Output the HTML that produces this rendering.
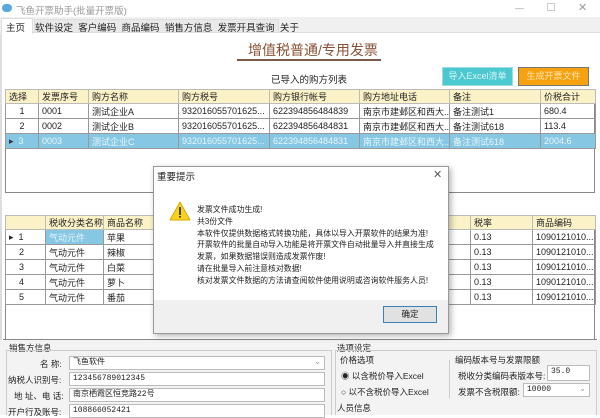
<!DOCTYPE html>
<html><head><meta charset="utf-8"><style>
*{margin:0;padding:0;box-sizing:border-box}
body{width:600px;height:415px;overflow:hidden;background:#fff;font-family:"Liberation Sans","Noto Sans CJK SC",sans-serif;font-size:9px;color:#222;position:relative}
.a{position:absolute;white-space:nowrap}
table{border-collapse:collapse;table-layout:fixed;position:absolute}
td{border:1px solid #999;height:15px;padding:0 3px;overflow:hidden;white-space:nowrap;font-size:9px}
tr.h td{background:#fbf2c8;height:13px;border-color:#bbb}
tr.s td{background:#86c7e3;color:#e8f6fb}
.box{position:absolute;border:1px solid #bbb;background:#fff;height:14px;font-size:8px;padding:0 3px;line-height:12px;font-family:"Liberation Mono","Noto Sans CJK SC",monospace}
.l{font-size:8.5px}
</style></head><body>
<div class="a" style="left:0;top:0;width:600px;height:17px;background:#fff"></div>
<div class="a" style="left:2px;top:4px;width:10px;height:8px;border-radius:5px;background:#5aa9dd"></div>
<div class="a" style="left:16px;top:3px;color:#999;font-size:9.5px">飞鱼开票助手(批量开票版)</div>
<div class="a" style="left:515px;top:3px;color:#999">—</div>
<div class="a" style="left:547px;top:3px;width:8px;height:8px;border:1px solid #ccc"></div>
<div class="a" style="left:578px;top:1px;color:#999;font-size:11px">✕</div>
<div class="a" style="left:0;top:17px;width:600px;height:16px;background:#f0f0f0;border-bottom:1px solid #ddd"></div>
<div class="a" style="left:1px;top:18px;width:32px;height:16px;background:#fff;border:1px solid #ddd;border-bottom:none;padding:1px 4px;font-size:9.5px">主页</div>
<div class="a" style="left:34px;top:19px;height:14px;width:245px;background:#e9e9e9;border:1px solid #ddd"></div>
<div class="a" style="left:35px;top:20px;font-size:9.5px">软件设定&nbsp;&nbsp;客户编码&nbsp;&nbsp;商品编码&nbsp;&nbsp;销售方信息&nbsp;&nbsp;发票开具查询&nbsp;&nbsp;关于</div>
<div class="a" style="left:0;top:34px;width:2px;height:381px;background:#ddd"></div>
<div class="a" style="left:248px;top:40px;font-size:14px;color:#8a5236">增值税普通/专用发票</div>
<div class="a" style="left:237px;top:59px;width:144px;height:2px;background:#7a5a4a"></div>
<div class="a" style="left:271px;top:72px;font-size:9.5px">已导入的购方列表</div>
<div class="a" style="left:442px;top:67px;width:71px;height:19px;background:#4cc8d0;border:1px solid #9cdde2;color:#d8f5f7;font-size:9px;text-align:center;line-height:17px">导入Excel清单</div>
<div class="a" style="left:518px;top:67px;width:71px;height:19px;background:#f6a20e;border:1px solid #777;color:#fde5b8;font-size:9px;text-align:center;line-height:17px">生成开票文件</div>
<div class="a" style="left:5px;top:89px;width:590px;height:104px;border:1px solid #888"></div>
<table style="left:5px;top:89px;width:590px">
<colgroup><col style="width:33px"><col style="width:50px"><col style="width:90px"><col style="width:91px"><col style="width:90px"><col style="width:90px"><col style="width:91px"><col style="width:55px"></colgroup>
<tr class="h"><td>选择</td><td>发票序号</td><td>购方名称</td><td>购方税号</td><td>购方银行帐号</td><td>购方地址电话</td><td>备注</td><td>价税合计</td></tr>
<tr><td style="text-align:center">1</td><td>0001</td><td>测试企业A</td><td>932016055701625...</td><td>622394856484839</td><td>南京市建邺区和西大...</td><td>备注测试1</td><td>680.4</td></tr>
<tr><td style="text-align:center">2</td><td>0002</td><td>测试企业B</td><td>932016055701625...</td><td>622394856484831</td><td>南京市建邺区和西大...</td><td>备注测试618</td><td>113.4</td></tr>
<tr class="s"><td><span style="color:#333">▸</span> &nbsp;3</td><td>0003</td><td>测试企业C</td><td>932016055701625...</td><td>622394856484831</td><td>南京市建邺区和西大...</td><td>备注测试618</td><td>2004.6</td></tr>
</table>
<div class="a" style="left:5px;top:215px;width:590px;height:125px;border:1px solid #888;border-bottom:none"></div>
<table style="left:5px;top:215px;width:590px">
<colgroup><col style="width:40px"><col style="width:58px"><col style="width:60px"><col style="width:307px"><col style="width:62px"><col style="width:63px"></colgroup>
<tr class="h"><td></td><td>税收分类名称</td><td>商品名称</td><td></td><td>税率</td><td>商品编码</td></tr>
<tr><td>▸ &nbsp;1</td><td style="background:#86c7e3;color:#e8f6fb">气动元件</td><td>苹果</td><td></td><td>0.13</td><td>1090121010...</td></tr>
<tr><td>&nbsp;&nbsp;&nbsp;&nbsp;2</td><td>气动元件</td><td>辣椒</td><td></td><td>0.13</td><td>1090121010...</td></tr>
<tr><td>&nbsp;&nbsp;&nbsp;&nbsp;3</td><td>气动元件</td><td>白菜</td><td></td><td>0.13</td><td>1090121010...</td></tr>
<tr><td>&nbsp;&nbsp;&nbsp;&nbsp;4</td><td>气动元件</td><td>萝卜</td><td></td><td>0.13</td><td>1090121010...</td></tr>
<tr><td>&nbsp;&nbsp;&nbsp;&nbsp;5</td><td>气动元件</td><td>番茄</td><td></td><td>0.13</td><td>1090121010...</td></tr>
</table>
<div class="a" style="left:3px;top:339px;width:594px;height:1px;background:#888"></div>
<div class="a" style="left:0;top:340px;width:600px;height:75px;background:#f3f3f3"></div>
<div class="a l" style="left:9px;top:342px">销售方信息</div>
<div class="a" style="left:6px;top:350px;width:326px;height:65px;border:1px solid #ccc;border-bottom:none"></div>
<div class="a l" style="left:40px;top:358px">名 称:</div><div class="box" style="left:69px;top:356px;width:256px">飞鱼软件<span style="float:right;color:#999">⌄</span></div>
<div class="a l" style="left:8px;top:374px">纳税人识别号:</div><div class="box" style="left:69px;top:372px;width:256px">123456789012345</div>
<div class="a l" style="left:14px;top:390px">地 址、电 话:</div><div class="box" style="left:69px;top:388px;width:256px">南京栖霞区恒竞路22号</div>
<div class="a l" style="left:8px;top:406px">开户行及账号:</div><div class="box" style="left:69px;top:404px;width:256px">108866052421</div>
<div class="a l" style="left:337px;top:342px">选项设定</div>
<div class="a" style="left:335px;top:350px;width:262px;height:65px;border:1px solid #ccc;border-bottom:none"></div>
<div class="a l" style="left:340px;top:354px">价格选项</div>
<div class="a l" style="left:455px;top:354px">编码版本号与发票限额</div>
<div class="a" style="left:449px;top:360px;width:1px;height:38px;background:#ccc"></div>
<div class="a l" style="left:341px;top:370px">◉ 以含税价导入Excel</div>
<div class="a l" style="left:341px;top:386px">○ 以不含税价导入Excel</div>
<div class="a l" style="left:458px;top:370px">税收分类编码表版本号:</div><div class="box" style="left:547px;top:365px;width:43px;height:16px">35.0</div>
<div class="a l" style="left:458px;top:386px">发票不含税限额:</div><div class="box" style="left:523px;top:383px;width:67px">10000<span style="float:right;color:#999">⌄</span></div>
<div class="a l" style="left:337px;top:402px">人员信息</div>
<div class="a" style="left:153px;top:166px;width:296px;height:168px;background:#fff;border:1px solid #999;box-shadow:2px 2px 6px rgba(0,0,0,.3)"></div>
<div class="a" style="left:157px;top:169px;font-size:9.5px">重要提示</div>
<div class="a" style="left:433px;top:168px;font-size:11px;color:#555">✕</div>
<svg class="a" style="left:169px;top:201px" width="22" height="20" viewBox="0 0 22 20"><path d="M11 1 L21 19 L1 19 Z" fill="#f7d21e" stroke="#d7a800" stroke-width="1" stroke-linejoin="round"/><rect x="10.2" y="6" width="1.6" height="8" fill="#222"/><rect x="10.2" y="15" width="1.6" height="1.6" fill="#222"/></svg>
<div class="a" style="left:197px;top:204px;font-size:7.9px;line-height:11.8px">发票文件成功生成!<br>共3份文件<br>本软件仅提供数据格式转换功能，具体以导入开票软件的结果为准!<br>开票软件的批量自动导入功能是将开票文件自动批量导入并直接生成<br>发票，如果数据错误则造成发票作废!<br>请在批量导入前注意核对数据!<br>核对发票文件数据的方法请查阅软件使用说明或咨询软件服务人员!</div>
<div class="a" style="left:154px;top:300px;width:294px;height:33px;background:#f0f0f0"></div>
<div class="a" style="left:383px;top:306px;width:54px;height:17px;background:#e1e1e1;border:1px solid #3c7fb1;text-align:center;line-height:15px;font-size:8.5px">确定</div>
</body></html>
